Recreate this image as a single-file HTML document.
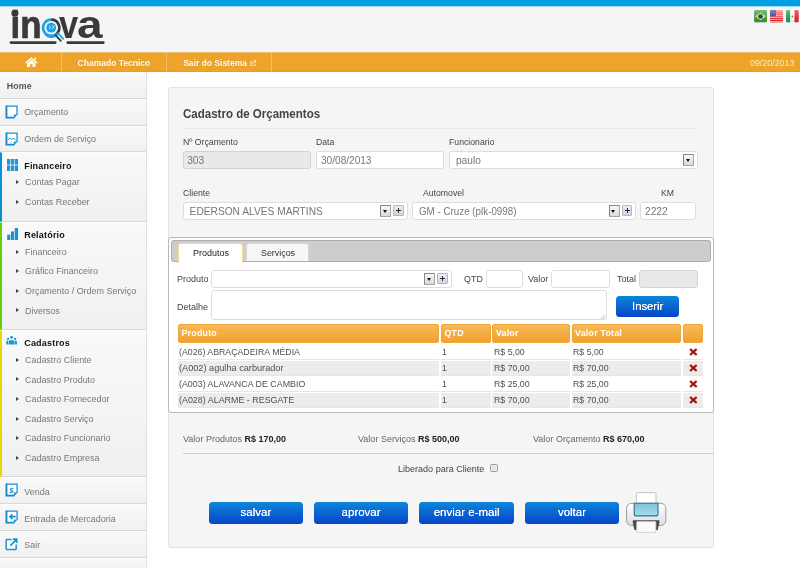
<!DOCTYPE html>
<html lang="pt-BR">
<head>
<meta charset="utf-8">
<title>Cadastro de Orçamentos</title>
<style>
*{box-sizing:border-box;margin:0;padding:0}
html,body{width:800px;height:568px;overflow:hidden;background:#fff}
body{font-family:"Liberation Sans",Arial,sans-serif;font-size:10px;color:#555;position:relative}
#w{position:absolute;left:0;top:0;width:800px;height:568px;will-change:transform}
.a{position:absolute}
.tx{white-space:nowrap;line-height:normal}
.nv{color:#fff6da;font-weight:bold;text-shadow:0 0 1px rgba(160,95,0,.6),0 0 .4px #fff6da}
.srow{background:linear-gradient(#f9f9f9,#f0f0f0);border-bottom:1px solid #d9d9d9;border-top:1px solid #fdfdfd}
.st{color:#777}
.sh{font-weight:bold;color:#111;letter-spacing:.2px}
.arr{width:0;height:0;border-left:3px solid #444;border-top:2.7px solid transparent;border-bottom:2.7px solid transparent}
.lbl{color:#444}
.inp{background:#fff;border:1px solid #dddddd;border-radius:3px;color:#777;white-space:nowrap;overflow:hidden}
.inp.dis{background:#e9e9e9;border-color:#d4d4d4}
.dd{background:linear-gradient(#f8f8f8,#d9d9d9);border:1px solid #858585;border-right-color:#a4a4a4;border-bottom-color:#a4a4a4;border-radius:1px}
.dd:after{content:"";position:absolute;left:1.6px;top:4.1px;border-top:3.1px solid #111;border-left:2.9px solid transparent;border-right:2.9px solid transparent}
.pl{background:linear-gradient(#eeeef6,#cfd0e2);border:1px solid #b4b4c4;border-radius:1px}
.pl:before{content:"";position:absolute;left:1.9px;top:3.75px;width:5px;height:1.3px;background:#2a2a2a}
.pl:after{content:"";position:absolute;left:3.75px;top:1.9px;width:1.3px;height:5px;background:#2a2a2a}
.btn{border-radius:3.5px;background:linear-gradient(#0d86d8 0%,#0a63d2 52%,#0646c6 100%);color:#fff;text-align:center;white-space:nowrap;text-shadow:0 0 .6px rgba(255,255,255,.9)}
.th{background:linear-gradient(#f9b856,#f0a131);border:1px solid #efa638;border-radius:2px;color:#fff;font-weight:bold;white-space:nowrap;letter-spacing:.3px}
.td{color:#505050;white-space:nowrap}
</style>
</head>
<body>
<div id="w">
<div class="a" style="left:0px;top:0px;width:800px;height:6px;background:#00a1e4"></div>
<div class="a" style="left:0px;top:6px;width:800px;height:47px;background:#f5f5f5"></div>
<div class="a" style="left:0px;top:6px;width:800px;height:1px;background:#a2d8ef"></div>
<svg class="a" style="left:0;top:6px" width="120" height="46" viewBox="0 6 120 46">
<text y="38.2" font-family="Liberation Sans,sans-serif" font-weight="bold" font-size="38.6" fill="#3a3a3c"><tspan x="10.6" stroke="#3a3a3c" stroke-width=".7" textLength="31" lengthAdjust="spacingAndGlyphs">in</tspan><tspan x="42" font-size="35" fill="#1aa3e6" textLength="18.6" lengthAdjust="spacingAndGlyphs">o</tspan><tspan x="58.9" textLength="19.2" lengthAdjust="spacingAndGlyphs">v</tspan><tspan x="77" textLength="25.6" lengthAdjust="spacingAndGlyphs">a</tspan></text>
<circle cx="14.9" cy="13.2" r="3.5" fill="#3a3a3c"/>
<circle cx="51.2" cy="27.7" r="8.1" fill="#f5f5f5"/>
<path d="M51.2 19.6a8.1 8.1 0 1 0 5.5 14.05" fill="none" stroke="#1aa3e6" stroke-width="2.6"/>
<path d="M51.2 19.6a8.1 8.1 0 0 1 5.5 14.05" fill="none" stroke="#3a3a3c" stroke-width="2.6"/>
<circle cx="51.2" cy="27.7" r="4.9" fill="#1aa3e6"/>
<path d="M49.3 26.2l1.6 1.3-1.8 1.6M52.2 25.3l2 1.5-2.2 2.3" fill="none" stroke="#e8f6fd" stroke-width=".9"/>
<path d="M55.6 35.2l5.2 5.6" stroke="#3a3a3c" stroke-width="1.8" stroke-linecap="round"/>
<path d="M58 33.2l5.2 5.6" stroke="#1aa3e6" stroke-width="1.8" stroke-linecap="round"/>
<path d="M11 42.6h44.2M67.8 42.6h35.5" stroke="#3a3a3c" stroke-width="2.8" stroke-linecap="round"/>
</svg>
<svg class="a" style="left:754px;top:9.5px" width="46" height="13" viewBox="754 9.5 46 13">
<defs><clipPath id="f1"><rect x="754.1" y="9.6" width="12.9" height="12.4" rx="1.6"/></clipPath><clipPath id="f2"><rect x="770" y="9.6" width="13" height="12.4" rx="1.6"/></clipPath><clipPath id="f3"><rect x="785.9" y="9.6" width="12.9" height="12.4" rx="1.6"/></clipPath>
<linearGradient id="gl" x1="0" y1="0" x2="0" y2="1"><stop offset="0" stop-color="#fff" stop-opacity=".35"/><stop offset=".5" stop-color="#fff" stop-opacity=".1"/><stop offset="1" stop-color="#000" stop-opacity=".08"/></linearGradient></defs>
<g clip-path="url(#f1)"><rect x="754" y="9.5" width="13.1" height="12.6" fill="#2f9a44"/><path d="M755.1 15.8l5.45-3.9 5.45 3.9-5.45 3.9z" fill="#f6e11c"/><circle cx="760.55" cy="15.8" r="2.35" fill="#1b2f9c"/><rect x="754" y="9.5" width="13.1" height="12.6" fill="url(#gl)"/></g>
<g clip-path="url(#f2)"><rect x="770" y="9.5" width="13" height="12.6" fill="#f7d6d6"/><path d="M770 10.5h13M770 12.4h13M770 14.3h13M770 16.2h13M770 18.1h13M770 20h13M770 21.8h13" stroke="#e8262c" stroke-width="1.1"/><rect x="770" y="9.5" width="6" height="6.3" fill="#39418f"/><rect x="770" y="9.5" width="13" height="12.6" fill="url(#gl)"/></g>
<g clip-path="url(#f3)"><rect x="785.9" y="9.5" width="4.4" height="12.6" fill="#1f9a48"/><rect x="790.3" y="9.5" width="4.2" height="12.6" fill="#fbfbfb"/><rect x="794.5" y="9.5" width="4.4" height="12.6" fill="#e0222a"/><circle cx="792.4" cy="15.9" r="1" fill="#8a6a3a"/><rect x="785.9" y="9.5" width="13" height="12.6" fill="url(#gl)"/></g>
</svg>
<div class="a" style="left:0px;top:52.4px;width:800px;height:19.3px;background:#eea42b;border-top:1px solid #f3c07a;border-bottom:1px solid #e89e24"></div>
<div class="a" style="left:61.2px;top:53px;width:0.8px;height:18px;background:#f4c067"></div>
<div class="a" style="left:166px;top:53px;width:0.8px;height:18px;background:#f4c067"></div>
<div class="a" style="left:271.4px;top:53px;width:0.8px;height:18px;background:#f4c067"></div>
<svg class="a" style="left:24px;top:56px" width="14" height="12" viewBox="24 56 14 12"><path d="M25.5 63.1L31.3 58.2L37 63.1" fill="none" stroke="#fff8e2" stroke-width="1.5"/><rect x="34.3" y="57.4" width="1.5" height="3" fill="#fff8e2"/><path d="M27 63.4L31.3 59.6L35.4 63.4V67H32.5V64.3H30.1V67H27z" fill="#fff8e2"/></svg>
<div class="a tx nv" style="left:77.6px;top:57.51px;font-size:8.5px;">Chamado Tecnico</div>
<div class="a tx nv" style="left:183.2px;top:57.51px;font-size:8.5px;">Sair do Sistema</div>
<svg class="a" style="left:249.6px;top:59.8px" width="6.6" height="6.6" viewBox="0 0 7 7"><path d="M5.2 4v2.1H.9V1.8H3" fill="none" stroke="#fff5d6" stroke-width=".9"/><path d="M3 4l3-3M4.1.7h2.3v2.3" fill="none" stroke="#fff5d6" stroke-width="1"/></svg>
<div class="a tx" style="left:750px;top:57.55px;font-size:8.9px;color:#fcecb8;">09/20/2013</div>
<div class="a" style="left:0px;top:71.8px;width:147px;height:496.2px;background:#f3f3f3;border-right:1px solid #e0e0e0"></div>
<div class="a srow" style="left:0px;top:71.9px;width:146.2px;height:26.9px;"></div>
<div class="a tx" style="left:6.8px;top:80.94px;font-size:8.8px;font-weight:bold;color:#555;letter-spacing:.1px;">Home</div>
<div class="a srow" style="left:0px;top:98.8px;width:146.2px;height:26.9px;"></div>
<svg class="a" style="left:5.4px;top:104.6px" width="13.4" height="14.2" viewBox="0 0 13.4 14.2"><path d="M1.45 1.15H12.05V9.7L9.1 12.65H1.45z" fill="#fff"/><path d="M1.45 1.15H12.05V9.9" fill="none" stroke="#1b93d6" stroke-width="1.3"/><path d="M1.45 0.5V12.65H9.3" fill="none" stroke="#1788cb" stroke-width="1.9"/><path d="M8.9 9.6h3.8L8.9 13.55z" fill="#1b93d6"/></svg>
<div class="a tx st" style="left:24.2px;top:107.33px;font-size:8.92px;">Orçamento</div>
<div class="a srow" style="left:0px;top:125.7px;width:146.2px;height:26.7px;"></div>
<svg class="a" style="left:5.4px;top:131.5px" width="13.4" height="14.2" viewBox="0 0 13.4 14.2"><path d="M1.45 1.15H12.05V9.7L9.1 12.65H1.45z" fill="#fff"/><path d="M1.45 1.15H12.05V9.9" fill="none" stroke="#1b93d6" stroke-width="1.3"/><path d="M1.45 0.5V12.65H9.3" fill="none" stroke="#1788cb" stroke-width="1.9"/><path d="M8.9 9.6h3.8L8.9 13.55z" fill="#1b93d6"/><path d="M2.6 8.3l2.1-2.3 1.9 1.4 1.6-1.1 2.4 1.5" fill="none" stroke="#1b93d6" stroke-width="1"/></svg>
<div class="a tx st" style="left:24.2px;top:134.12px;font-size:8.93px;">Ordem de Serviço</div>
<div class="a srow" style="left:0px;top:152.4px;width:146.2px;height:69.3px;border-left:2.6px solid #0a8fd8"></div>
<svg class="a" style="left:6.8px;top:158.8px" width="11.1" height="12.2" viewBox="0 0 12 12" preserveAspectRatio="none"><rect width="12" height="12" fill="#1b93d6"/><path d="M3.9 0v12M8 0v12M0 5.9h12" stroke="#c9e8f8" stroke-width="1"/></svg>
<div class="a tx sh" style="left:24.2px;top:160.75px;font-size:9px;">Financeiro</div>
<div class="a arr" style="left:15.6px;top:180.2px;width:0px;height:0px;"></div>
<div class="a tx st" style="left:25px;top:177.4px;font-size:8.95px;">Contas Pagar</div>
<div class="a arr" style="left:15.6px;top:199.8px;width:0px;height:0px;"></div>
<div class="a tx st" style="left:25px;top:197px;font-size:8.95px;">Contas Receber</div>
<div class="a srow" style="left:0px;top:221.7px;width:146.2px;height:108.3px;border-left:2.6px solid #5fd10a"></div>
<svg class="a" style="left:6.8px;top:227.9px" width="11.4" height="12.2" viewBox="0 0 12 12" preserveAspectRatio="none"><rect x="0.2" y="6.6" width="3.3" height="5.4" fill="#1b93d6"/><rect x="4.2" y="3.4" width="3.3" height="8.6" fill="#1b93d6"/><rect x="8.2" y="0" width="3.4" height="12" fill="#1b93d6"/></svg>
<div class="a tx sh" style="left:24.2px;top:230.05px;font-size:9px;">Relatório</div>
<div class="a arr" style="left:15.6px;top:249.5px;width:0px;height:0px;"></div>
<div class="a tx st" style="left:25px;top:246.7px;font-size:8.95px;">Financeiro</div>
<div class="a arr" style="left:15.6px;top:269.1px;width:0px;height:0px;"></div>
<div class="a tx st" style="left:25px;top:266.3px;font-size:8.95px;">Gráfico Financeiro</div>
<div class="a arr" style="left:15.6px;top:288.7px;width:0px;height:0px;"></div>
<div class="a tx st" style="left:25px;top:285.9px;font-size:8.95px;">Orçamento / Ordem Serviço</div>
<div class="a arr" style="left:15.6px;top:308.3px;width:0px;height:0px;"></div>
<div class="a tx st" style="left:25px;top:305.5px;font-size:8.95px;">Diversos</div>
<div class="a srow" style="left:0px;top:330px;width:146.2px;height:147.4px;border-left:2.6px solid #e6d800"></div>
<svg class="a" style="left:6.4px;top:336.3px" width="11.2" height="9" viewBox="0 0 12 10" preserveAspectRatio="none"><circle cx="6" cy="1.6" r="1.5" fill="#1b93d6"/><circle cx="2.2" cy="3.2" r="1.2" fill="#1b93d6"/><circle cx="9.8" cy="3.2" r="1.2" fill="#1b93d6"/><path d="M3 9.5V6a1.4 1.4 0 0 1 1.4-1.4h3.2A1.4 1.4 0 0 1 9 6v3.5z" fill="#1b93d6"/><path d="M.3 9.5V6.3a1 1 0 0 1 1-1h1.2v4.2zM11.7 9.5V6.3a1 1 0 0 0-1-1H9.5v4.2z" fill="#1b93d6"/></svg>
<div class="a tx sh" style="left:24.2px;top:338.36px;font-size:9px;">Cadastros</div>
<div class="a arr" style="left:15.6px;top:357.8px;width:0px;height:0px;"></div>
<div class="a tx st" style="left:25px;top:355px;font-size:8.95px;">Cadastro Cliente</div>
<div class="a arr" style="left:15.6px;top:377.4px;width:0px;height:0px;"></div>
<div class="a tx st" style="left:25px;top:374.6px;font-size:8.95px;">Cadastro Produto</div>
<div class="a arr" style="left:15.6px;top:397px;width:0px;height:0px;"></div>
<div class="a tx st" style="left:25px;top:394.2px;font-size:8.95px;">Cadastro Fornecedor</div>
<div class="a arr" style="left:15.6px;top:416.6px;width:0px;height:0px;"></div>
<div class="a tx st" style="left:25px;top:413.8px;font-size:8.95px;">Cadastro Serviço</div>
<div class="a arr" style="left:15.6px;top:436.2px;width:0px;height:0px;"></div>
<div class="a tx st" style="left:25px;top:433.4px;font-size:8.95px;">Cadastro Funcionario</div>
<div class="a arr" style="left:15.6px;top:455.8px;width:0px;height:0px;"></div>
<div class="a tx st" style="left:25px;top:453px;font-size:8.95px;">Cadastro Empresa</div>
<div class="a srow" style="left:0px;top:477.4px;width:146.2px;height:26.8px;"></div>
<svg class="a" style="left:5.4px;top:483.2px" width="13.4" height="14.2" viewBox="0 0 13.4 14.2"><path d="M1.45 1.15H12.05V9.7L9.1 12.65H1.45z" fill="#fff"/><path d="M1.45 1.15H12.05V9.9" fill="none" stroke="#1b93d6" stroke-width="1.3"/><path d="M1.45 0.5V12.65H9.3" fill="none" stroke="#1788cb" stroke-width="1.9"/><path d="M8.9 9.6h3.8L8.9 13.55z" fill="#1b93d6"/><text x="6.6" y="9.6" font-family="Liberation Sans,sans-serif" font-size="8" font-weight="bold" font-style="italic" fill="#1b93d6" text-anchor="middle">$</text></svg>
<div class="a tx st" style="left:24.2px;top:487.06px;font-size:9px;">Venda</div>
<div class="a srow" style="left:0px;top:504.2px;width:146.2px;height:26.8px;"></div>
<svg class="a" style="left:5.4px;top:510px" width="13.4" height="14.2" viewBox="0 0 13.4 14.2"><path d="M1.45 1.15H12.05V9.7L9.1 12.65H1.45z" fill="#fff"/><path d="M1.45 1.15H12.05V9.9" fill="none" stroke="#1b93d6" stroke-width="1.3"/><path d="M1.45 0.5V12.65H9.3" fill="none" stroke="#1788cb" stroke-width="1.9"/><path d="M8.9 9.6h3.8L8.9 13.55z" fill="#1b93d6"/><path d="M10.8 6.7H5.4M7.4 4.3L5 6.7l2.4 2.4" fill="none" stroke="#1b93d6" stroke-width="1.7"/></svg>
<div class="a tx st" style="left:24.2px;top:513.56px;font-size:9px;">Entrada de Mercadoria</div>
<div class="a srow" style="left:0px;top:531px;width:146.2px;height:26.8px;"></div>
<svg class="a" style="left:5.4px;top:536.8px" width="13.4" height="13.8" viewBox="0 0 13.4 13.8"><path d="M6.6 2.6H1.9a.7.7 0 0 0-.7.7v8.5a.7.7 0 0 0 .7.7h8.6a.7.7 0 0 0 .7-.7V7.6" fill="#fff" stroke="#1b93d6" stroke-width="1.5"/><path d="M5.4 8.6l5.6-5.8M7.8 2.1h3.9v3.9" fill="none" stroke="#1b93d6" stroke-width="1.7"/></svg>
<div class="a tx st" style="left:24.2px;top:539.96px;font-size:9px;">Sair</div>
<div class="a srow" style="left:0px;top:557.8px;width:146.2px;height:11px;border-bottom:0"></div>
<div class="a" style="left:168px;top:87.4px;width:546px;height:460.4px;background:#f5f5f5;border:1px solid #e3e3e3;border-radius:3px"></div>
<div class="a tx" style="left:183.4px;top:107.36px;font-size:12.2px;font-weight:bold;color:#444;transform:scaleX(0.946);transform-origin:0 0;">Cadastro de Orçamentos</div>
<div class="a" style="left:183px;top:127.9px;width:515px;height:1px;background:#ebebeb"></div>
<div class="a tx lbl" style="left:183.4px;top:137.36px;font-size:9.1px;transform:scaleX(0.955);transform-origin:0 0;">Nº Orçamento</div>
<div class="a tx lbl" style="left:316px;top:137.36px;font-size:9.1px;transform:scaleX(0.955);transform-origin:0 0;">Data</div>
<div class="a tx lbl" style="left:449.4px;top:137.36px;font-size:9.1px;transform:scaleX(0.955);transform-origin:0 0;">Funcionario</div>
<div class="a inp dis" style="left:183px;top:151.4px;width:128px;height:17.2px;"></div>
<div class="a tx" style="left:187.2px;top:155.32px;font-size:10.2px;color:#777;">303</div>
<div class="a inp" style="left:315.6px;top:151.4px;width:128.6px;height:17.2px;"></div>
<div class="a tx" style="left:320.5px;top:155.32px;font-size:10.2px;color:#777;transform:scaleX(0.99);transform-origin:0 0;">30/08/2013</div>
<div class="a inp" style="left:449.3px;top:151.4px;width:249px;height:17.2px;"></div>
<div class="a tx" style="left:455.9px;top:155.32px;font-size:10.2px;color:#777;">paulo</div>
<div class="a dd" style="left:683.1px;top:154px;width:10.9px;height:11.5px;"></div>
<div class="a tx lbl" style="left:183.4px;top:187.76px;font-size:9.1px;transform:scaleX(0.955);transform-origin:0 0;">Cliente</div>
<div class="a tx lbl" style="left:422.6px;top:187.76px;font-size:9.1px;transform:scaleX(0.955);transform-origin:0 0;">Automovel</div>
<div class="a tx lbl" style="left:660.8px;top:187.76px;font-size:9.1px;transform:scaleX(0.955);transform-origin:0 0;">KM</div>
<div class="a inp" style="left:183px;top:202.4px;width:225.2px;height:17.2px;"></div>
<div class="a tx" style="left:189.6px;top:206.32px;font-size:10.2px;color:#777;">EDERSON ALVES MARTINS</div>
<div class="a dd" style="left:380.1px;top:205px;width:10.9px;height:11.5px;"></div>
<div class="a pl" style="left:393.3px;top:205.1px;width:10.6px;height:11.2px;"></div>
<div class="a inp" style="left:411.7px;top:202.4px;width:224.6px;height:17.2px;"></div>
<div class="a tx" style="left:418.5px;top:206.32px;font-size:10.2px;color:#777;transform:scaleX(0.962);transform-origin:0 0;">GM - Cruze (plk-0998)</div>
<div class="a dd" style="left:608.9px;top:205px;width:10.9px;height:11.5px;"></div>
<div class="a pl" style="left:621.8px;top:205.1px;width:10.6px;height:11.2px;"></div>
<div class="a inp" style="left:640px;top:202.4px;width:56.3px;height:17.2px;"></div>
<div class="a tx" style="left:645px;top:206.32px;font-size:10.2px;color:#777;">2222</div>
<div class="a" style="left:168.4px;top:237.3px;width:546px;height:176.2px;background:#fff;border:1px solid #b9b9b9;border-radius:3px"></div>
<div class="a" style="left:171.2px;top:240px;width:539.6px;height:21.8px;background:#cdcdcd;border:1px solid #adadad;border-radius:3px"></div>
<div class="a" style="left:178px;top:242.5px;width:64.6px;height:20.3px;background:#fff;border:1px solid #f3dc84;border-bottom:0;border-radius:3px 3px 0 0"></div>
<div class="a tx" style="left:192.6px;top:246.91px;font-size:9.6px;color:#222;transform:scaleX(0.935);transform-origin:0 0;">Produtos</div>
<div class="a" style="left:245.8px;top:242.5px;width:63.6px;height:18.4px;background:#f6f6f6;border:1px solid #d8d8d8;border-bottom:0;border-radius:3px 3px 0 0"></div>
<div class="a tx" style="left:260.6px;top:246.71px;font-size:9.6px;color:#333;transform:scaleX(0.925);transform-origin:0 0;">Serviços</div>
<div class="a tx lbl" style="left:177px;top:273.05px;font-size:9.45px;transform:scaleX(0.95);transform-origin:0 0;">Produto</div>
<div class="a inp" style="left:211.2px;top:270.2px;width:240.4px;height:17.5px;"></div>
<div class="a dd" style="left:424.1px;top:273.1px;width:10.9px;height:11.5px;"></div>
<div class="a pl" style="left:437.1px;top:273.2px;width:10.6px;height:11.2px;"></div>
<div class="a tx lbl" style="left:464px;top:273.25px;font-size:9.45px;transform:scaleX(0.95);transform-origin:0 0;">QTD</div>
<div class="a inp" style="left:485.5px;top:270.2px;width:37px;height:17.5px;"></div>
<div class="a tx lbl" style="left:527.5px;top:273.05px;font-size:9.45px;transform:scaleX(0.95);transform-origin:0 0;">Valor</div>
<div class="a inp" style="left:551.3px;top:270.2px;width:59.1px;height:17.5px;"></div>
<div class="a tx lbl" style="left:616.5px;top:273.05px;font-size:9.45px;transform:scaleX(0.95);transform-origin:0 0;">Total</div>
<div class="a inp dis" style="left:639px;top:270.2px;width:59.3px;height:17.5px;"></div>
<div class="a tx lbl" style="left:177px;top:300.65px;font-size:9.45px;transform:scaleX(0.95);transform-origin:0 0;">Detalhe</div>
<div class="a inp" style="left:210.8px;top:290.3px;width:395.9px;height:29.5px;"></div>
<svg class="a" style="left:600.4px;top:314px" width="5.4" height="5.4" viewBox="0 0 7 7"><path d="M6.5 1L1 6.5M6.5 4L4 6.5" stroke="#999" stroke-width=".8"/></svg>
<div class="a btn" style="left:616.3px;top:295.7px;width:62.8px;height:20.9px;font-size:11.3px;line-height:21.4px">Inserir</div>
<div class="a th" style="left:178px;top:323.7px;width:260.8px;height:19.1px;"></div>
<div class="a tx" style="left:181.5px;top:328.35px;font-size:8.9px;color:#fff;font-weight:bold;letter-spacing:.2px;">Produto</div>
<div class="a th" style="left:441px;top:323.7px;width:49.6px;height:19.1px;"></div>
<div class="a tx" style="left:444.5px;top:328.35px;font-size:8.9px;color:#fff;font-weight:bold;letter-spacing:.2px;">QTD</div>
<div class="a th" style="left:492.4px;top:323.7px;width:77.6px;height:19.1px;"></div>
<div class="a tx" style="left:495.9px;top:328.35px;font-size:8.9px;color:#fff;font-weight:bold;letter-spacing:.2px;">Valor</div>
<div class="a th" style="left:571.6px;top:323.7px;width:109.4px;height:19.1px;"></div>
<div class="a tx" style="left:575.1px;top:328.35px;font-size:8.9px;color:#fff;font-weight:bold;letter-spacing:.2px;">Valor Total</div>
<div class="a th" style="left:682.7px;top:323.7px;width:20px;height:19.1px;"></div>
<div class="a" style="left:178px;top:345px;width:260.8px;height:14.8px;background:#fff;border-bottom:1px solid #e6e6e6"></div>
<div class="a tx td" style="left:179.2px;top:346.57px;font-size:9.2px;transform:scaleX(0.955);transform-origin:0 0;">(A026) ABRAÇADEIRA MÉDIA</div>
<div class="a" style="left:441px;top:345px;width:49.6px;height:14.8px;background:#fff;border-bottom:1px solid #e6e6e6"></div>
<div class="a tx td" style="left:442.2px;top:346.57px;font-size:9.2px;transform:scaleX(0.955);transform-origin:0 0;">1</div>
<div class="a" style="left:492.4px;top:345px;width:77.6px;height:14.8px;background:#fff;border-bottom:1px solid #e6e6e6"></div>
<div class="a tx td" style="left:493.6px;top:346.57px;font-size:9.2px;transform:scaleX(0.955);transform-origin:0 0;">R$ 5,00</div>
<div class="a" style="left:571.6px;top:345px;width:109.4px;height:14.8px;background:#fff;border-bottom:1px solid #e6e6e6"></div>
<div class="a tx td" style="left:572.8px;top:346.57px;font-size:9.2px;transform:scaleX(0.955);transform-origin:0 0;">R$ 5,00</div>
<div class="a" style="left:682.7px;top:345px;width:20px;height:14.8px;background:#fff;border-bottom:1px solid #e6e6e6"></div>
<svg class="a" style="left:688.9px;top:348px" width="8.8" height="8" preserveAspectRatio="none" viewBox="0 0 9 9"><path d="M1.2 1.2l6.6 6.6M7.8 1.2L1.2 7.8" stroke="#a5100e" stroke-width="2.3"/></svg>
<div class="a" style="left:178px;top:361px;width:260.8px;height:14.8px;background:#ececec;border-bottom:1px solid #e6e6e6"></div>
<div class="a tx td" style="left:179.2px;top:362.57px;font-size:9.2px;transform:scaleX(0.998);transform-origin:0 0;">(A002) agulha carburador</div>
<div class="a" style="left:441px;top:361px;width:49.6px;height:14.8px;background:#ececec;border-bottom:1px solid #e6e6e6"></div>
<div class="a tx td" style="left:442.2px;top:362.57px;font-size:9.2px;transform:scaleX(0.955);transform-origin:0 0;">1</div>
<div class="a" style="left:492.4px;top:361px;width:77.6px;height:14.8px;background:#ececec;border-bottom:1px solid #e6e6e6"></div>
<div class="a tx td" style="left:493.6px;top:362.57px;font-size:9.2px;transform:scaleX(0.955);transform-origin:0 0;">R$ 70,00</div>
<div class="a" style="left:571.6px;top:361px;width:109.4px;height:14.8px;background:#ececec;border-bottom:1px solid #e6e6e6"></div>
<div class="a tx td" style="left:572.8px;top:362.57px;font-size:9.2px;transform:scaleX(0.955);transform-origin:0 0;">R$ 70,00</div>
<div class="a" style="left:682.7px;top:361px;width:20px;height:14.8px;background:#ececec;border-bottom:1px solid #e6e6e6"></div>
<svg class="a" style="left:688.9px;top:364px" width="8.8" height="8" preserveAspectRatio="none" viewBox="0 0 9 9"><path d="M1.2 1.2l6.6 6.6M7.8 1.2L1.2 7.8" stroke="#a5100e" stroke-width="2.3"/></svg>
<div class="a" style="left:178px;top:377px;width:260.8px;height:14.8px;background:#fff;border-bottom:1px solid #e6e6e6"></div>
<div class="a tx td" style="left:179.2px;top:378.57px;font-size:9.2px;transform:scaleX(0.965);transform-origin:0 0;">(A003) ALAVANCA DE CAMBIO</div>
<div class="a" style="left:441px;top:377px;width:49.6px;height:14.8px;background:#fff;border-bottom:1px solid #e6e6e6"></div>
<div class="a tx td" style="left:442.2px;top:378.57px;font-size:9.2px;transform:scaleX(0.955);transform-origin:0 0;">1</div>
<div class="a" style="left:492.4px;top:377px;width:77.6px;height:14.8px;background:#fff;border-bottom:1px solid #e6e6e6"></div>
<div class="a tx td" style="left:493.6px;top:378.57px;font-size:9.2px;transform:scaleX(0.955);transform-origin:0 0;">R$ 25,00</div>
<div class="a" style="left:571.6px;top:377px;width:109.4px;height:14.8px;background:#fff;border-bottom:1px solid #e6e6e6"></div>
<div class="a tx td" style="left:572.8px;top:378.57px;font-size:9.2px;transform:scaleX(0.955);transform-origin:0 0;">R$ 25,00</div>
<div class="a" style="left:682.7px;top:377px;width:20px;height:14.8px;background:#fff;border-bottom:1px solid #e6e6e6"></div>
<svg class="a" style="left:688.9px;top:380px" width="8.8" height="8" preserveAspectRatio="none" viewBox="0 0 9 9"><path d="M1.2 1.2l6.6 6.6M7.8 1.2L1.2 7.8" stroke="#a5100e" stroke-width="2.3"/></svg>
<div class="a" style="left:178px;top:393px;width:260.8px;height:14.8px;background:#ececec;border-bottom:1px solid #e6e6e6"></div>
<div class="a tx td" style="left:179.2px;top:394.57px;font-size:9.2px;transform:scaleX(0.97);transform-origin:0 0;">(A028) ALARME - RESGATE</div>
<div class="a" style="left:441px;top:393px;width:49.6px;height:14.8px;background:#ececec;border-bottom:1px solid #e6e6e6"></div>
<div class="a tx td" style="left:442.2px;top:394.57px;font-size:9.2px;transform:scaleX(0.955);transform-origin:0 0;">1</div>
<div class="a" style="left:492.4px;top:393px;width:77.6px;height:14.8px;background:#ececec;border-bottom:1px solid #e6e6e6"></div>
<div class="a tx td" style="left:493.6px;top:394.57px;font-size:9.2px;transform:scaleX(0.955);transform-origin:0 0;">R$ 70,00</div>
<div class="a" style="left:571.6px;top:393px;width:109.4px;height:14.8px;background:#ececec;border-bottom:1px solid #e6e6e6"></div>
<div class="a tx td" style="left:572.8px;top:394.57px;font-size:9.2px;transform:scaleX(0.955);transform-origin:0 0;">R$ 70,00</div>
<div class="a" style="left:682.7px;top:393px;width:20px;height:14.8px;background:#ececec;border-bottom:1px solid #e6e6e6"></div>
<svg class="a" style="left:688.9px;top:396px" width="8.8" height="8" preserveAspectRatio="none" viewBox="0 0 9 9"><path d="M1.2 1.2l6.6 6.6M7.8 1.2L1.2 7.8" stroke="#a5100e" stroke-width="2.3"/></svg>
<div class="a tx lbl" style="left:183.3px;top:433.49px;font-size:9.4px;transform:scaleX(0.962);transform-origin:0 0;"><span style="color:#666">Valor Produtos</span> <b style="color:#222">R$ 170,00</b></div>
<div class="a tx lbl" style="left:358px;top:433.49px;font-size:9.4px;transform:scaleX(0.962);transform-origin:0 0;"><span style="color:#666">Valor Serviços</span> <b style="color:#222">R$ 500,00</b></div>
<div class="a tx lbl" style="left:533px;top:433.49px;font-size:9.4px;transform:scaleX(0.962);transform-origin:0 0;"><span style="color:#666">Valor Orçamento</span> <b style="color:#222">R$ 670,00</b></div>
<div class="a" style="left:183px;top:453.3px;width:531px;height:1px;background:#cdcdcd"></div>
<div class="a tx lbl" style="left:397.5px;top:462.9px;font-size:9.5px;transform:scaleX(0.95);transform-origin:0 0;">Liberado para Cliente</div>
<div class="a" style="left:489.6px;top:463.5px;width:8.4px;height:8.4px;background:linear-gradient(135deg,#d6d6d6,#f4f4f4);border:1px solid #9a9a9a;border-radius:1.5px;box-shadow:inset 0 0 0 1px #ececec"></div>
<div class="a btn" style="left:208.8px;top:502.4px;width:94.2px;height:21.3px;font-size:11.5px;line-height:21.8px">salvar</div>
<div class="a btn" style="left:314px;top:502.4px;width:94.2px;height:21.3px;font-size:11.5px;line-height:21.8px">aprovar</div>
<div class="a btn" style="left:419.3px;top:502.4px;width:94.7px;height:21.3px;font-size:11.5px;line-height:21.8px">enviar e-mail</div>
<div class="a btn" style="left:524.8px;top:502.4px;width:94.4px;height:21.3px;font-size:11.5px;line-height:21.8px">voltar</div>
<svg class="a" style="left:625px;top:491px" width="43" height="43" viewBox="625 491 43 43">
<defs><linearGradient id="pg" x1="0" y1="0" x2="0" y2="1"><stop offset="0" stop-color="#ffffff"/><stop offset="1" stop-color="#dedede"/></linearGradient>
<linearGradient id="pb" x1="0" y1="0" x2="0" y2="1"><stop offset="0" stop-color="#7cc4dc"/><stop offset="1" stop-color="#a5dcea"/></linearGradient></defs>
<rect x="636.4" y="492.6" width="19.6" height="14" rx="1" fill="#fff" stroke="#bdbdbd" stroke-width=".9"/>
<rect x="626.6" y="503.3" width="39.2" height="22.2" rx="5" fill="url(#pg)" stroke="#9a9a9a" stroke-width="1"/>
<path d="M634.2 503.3h23.8v10.6a2 2 0 0 1-2 2h-19.8a2 2 0 0 1-2-2z" fill="url(#pb)" stroke="#2f7396" stroke-width="1.1"/>
<path d="M632.8 520.3h26.6v2.2l-1.6 7.5h-23.4l-1.6-7.5z" fill="#4a4a4a"/>
<rect x="636.7" y="521.6" width="19.2" height="10.8" rx=".8" fill="#fbfbfb" stroke="#c8c8c8" stroke-width=".8"/>
</svg>
</div>
</body>
</html>
